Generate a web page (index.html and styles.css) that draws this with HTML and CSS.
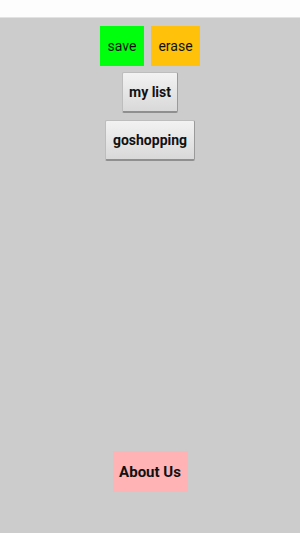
FILE: index.html
```html
<!DOCTYPE html>
<html lang="en">
<head>
    <meta charset="UTF-8">
    <meta name="viewport" content="width=device-width, initial-scale=1.0">
    <title>Shopping List</title>
    <link rel="stylesheet" href="styles.css">
</head>
<body>
    <div class="status-bar"></div>
    <div class="screen">
        <div class="top-row">
            <button class="flat save">save</button>
            <button class="flat erase">erase</button>
        </div>
        <button class="raised my-list">my list</button>
        <button class="raised go-shopping">goshopping</button>
        <button class="flat about">About Us</button>
    </div>
</body>
</html>
```

FILE: styles.css
```css
* { box-sizing: border-box; margin: 0; padding: 0; }
body { height: 533px; display: flex; flex-direction: column; background: #cccccc; font-family: Roboto, "Liberation Sans", sans-serif; color: #111; }
.status-bar { height: 18px; background: #fdfdfd; border-bottom: 1px solid #e2e2e2; }
.screen { flex: 1; display: flex; flex-direction: column; align-items: center; }
.top-row { display: flex; gap: 7px; margin-top: 8px; }
button { font-family: inherit; font-size: 14px; color: #111; border: none; }
.flat { height: 40px; }
.save { width: 44px; background: #00ff0c; }
.erase { width: 49px; background: #ffc10a; }
.raised { height: 41px; font-weight: bold; background: linear-gradient(#f2f2f2, #d9d9d9); border: 1px solid #bdbdbd; border-right-color: #9a9a9a; border-bottom: 2px solid #8f8f8f; border-radius: 2px; }
.my-list { width: 56px; margin-top: 6px; }
.go-shopping { width: 90px; margin-top: 7px; }
.about { width: 75px; height: 41px; margin-top: auto; margin-bottom: 41px; background: #ffb3b5; font-weight: bold; font-size: 15px; }
```
